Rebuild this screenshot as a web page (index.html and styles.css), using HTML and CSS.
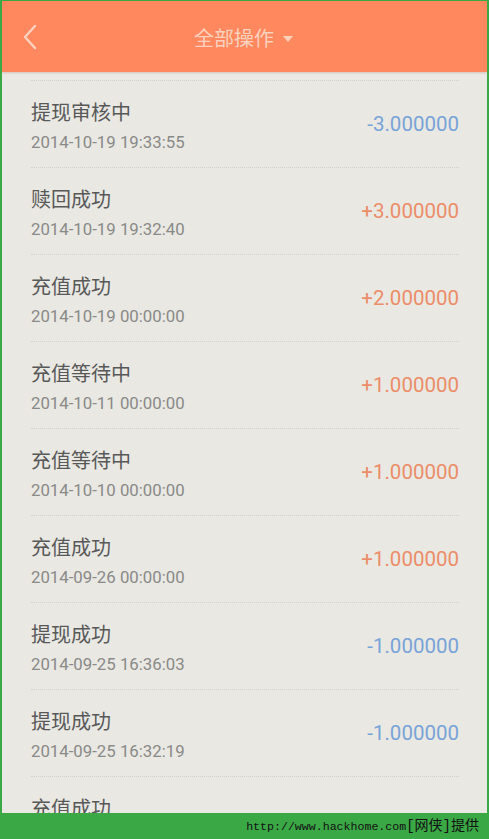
FILE: index.html
```html
<!DOCTYPE html>
<html>
<head>
  <meta charset="utf-8">
  <link rel="stylesheet" href="styles.css">
</head>
<body>
  <div class="screen">
    <div class="frame">
      <div class="topbar">
        <svg class="back" width="16" height="26" viewBox="0 0 16 26">
          <polyline points="13,2 3,13 13,24" fill="none" stroke="#fcd2bf" stroke-width="2.4" stroke-linecap="round" stroke-linejoin="round"/>
        </svg>
        <div class="title">全部操作<span class="caret"></span></div>
      </div>

      <div class="records">
        <div class="record">
          <div class="info">
            <div class="name">提现审核中</div>
            <div class="time">2014-10-19 19:33:55</div>
          </div>
          <div class="amount out">-3.000000</div>
        </div>
        <div class="record">
          <div class="info">
            <div class="name">赎回成功</div>
            <div class="time">2014-10-19 19:32:40</div>
          </div>
          <div class="amount in">+3.000000</div>
        </div>
        <div class="record">
          <div class="info">
            <div class="name">充值成功</div>
            <div class="time">2014-10-19 00:00:00</div>
          </div>
          <div class="amount in">+2.000000</div>
        </div>
        <div class="record">
          <div class="info">
            <div class="name">充值等待中</div>
            <div class="time">2014-10-11 00:00:00</div>
          </div>
          <div class="amount in">+1.000000</div>
        </div>
        <div class="record">
          <div class="info">
            <div class="name">充值等待中</div>
            <div class="time">2014-10-10 00:00:00</div>
          </div>
          <div class="amount in">+1.000000</div>
        </div>
        <div class="record">
          <div class="info">
            <div class="name">充值成功</div>
            <div class="time">2014-09-26 00:00:00</div>
          </div>
          <div class="amount in">+1.000000</div>
        </div>
        <div class="record">
          <div class="info">
            <div class="name">提现成功</div>
            <div class="time">2014-09-25 16:36:03</div>
          </div>
          <div class="amount out">-1.000000</div>
        </div>
        <div class="record">
          <div class="info">
            <div class="name">提现成功</div>
            <div class="time">2014-09-25 16:32:19</div>
          </div>
          <div class="amount out">-1.000000</div>
        </div>
        <!-- last row is cut off by the bottom strip -->
        <div class="record">
          <div class="info">
            <div class="name">充值成功</div>
          </div>
        </div>
      </div>
    </div>

    <div class="credit">http://www.hackhome.com<span class="cn">[网侠]提供</span></div>
  </div>
</body>
</html>
```

FILE: styles.css
```css
html, body { margin: 0; padding: 0; }
body { background: #3ba846; }

.screen {
  width: 489px;
  height: 839px;
  display: flex;
  flex-direction: column;
  overflow: hidden;
}
.frame {
  flex: 1;
  min-height: 0;
  display: flex;
  flex-direction: column;
  border-top: 1px solid #3ba846;
  border-left: 2px solid #3ba846;
  border-right: 2px solid #3ba846;
  background: #e9e8e3;
  overflow: hidden;
}

/* top bar */
.topbar {
  height: 71px;
  flex-shrink: 0;
  background: #ff885e;
  box-shadow: 0 1px 2px rgba(180, 120, 100, 0.35);
  display: flex;
  align-items: center;
  position: relative;
}
.back { margin-left: 20px; }
.title {
  position: absolute;
  left: 0;
  right: 0;
  top: 0;
  bottom: 0;
  display: flex;
  align-items: center;
  justify-content: center;
  padding-right: 2px;
  padding-top: 2px;
  color: #fcd2bf;
  font-family: "Noto Sans CJK SC", sans-serif;
  font-size: 20px;
}
.caret {
  width: 0;
  height: 0;
  margin-left: 9px;
  margin-top: 2px;
  border-left: 5px solid transparent;
  border-right: 5px solid transparent;
  border-top: 6px solid #fcd2bf;
}

/* list */
.records {
  padding: 8px 28px 0 29px;
}
.record {
  height: 87px;
  box-sizing: border-box;
  padding-top: 18px;
  border-top: 1px dotted #d2d1cc;
  display: flex;
  align-items: flex-start;
  justify-content: space-between;
}
.name {
  font-family: "Noto Sans CJK SC", sans-serif;
  font-size: 20px;
  line-height: 26px;
  color: #585858;
}
.time {
  margin-top: 7px;
  font-family: Roboto, sans-serif;
  font-size: 16.8px;
  line-height: 20px;
  color: #8a8a88;
}
.amount {
  align-self: center;
  margin-top: -18px;
  font-family: Roboto, sans-serif;
  font-size: 20.5px;
}
.amount.out { color: #78a3d8; }
.amount.in { color: #ec8d68; }

/* watermark strip */
.credit {
  height: 26px;
  flex-shrink: 0;
  background: #3ba846;
  text-align: right;
  padding-right: 10px;
  font-family: "Liberation Mono", monospace;
  font-size: 11.6px;
  line-height: 26px;
  color: #111;
}
.credit .cn {
  font-family: "Liberation Mono", "Noto Sans CJK SC", monospace;
  font-size: 14px;
}
```
